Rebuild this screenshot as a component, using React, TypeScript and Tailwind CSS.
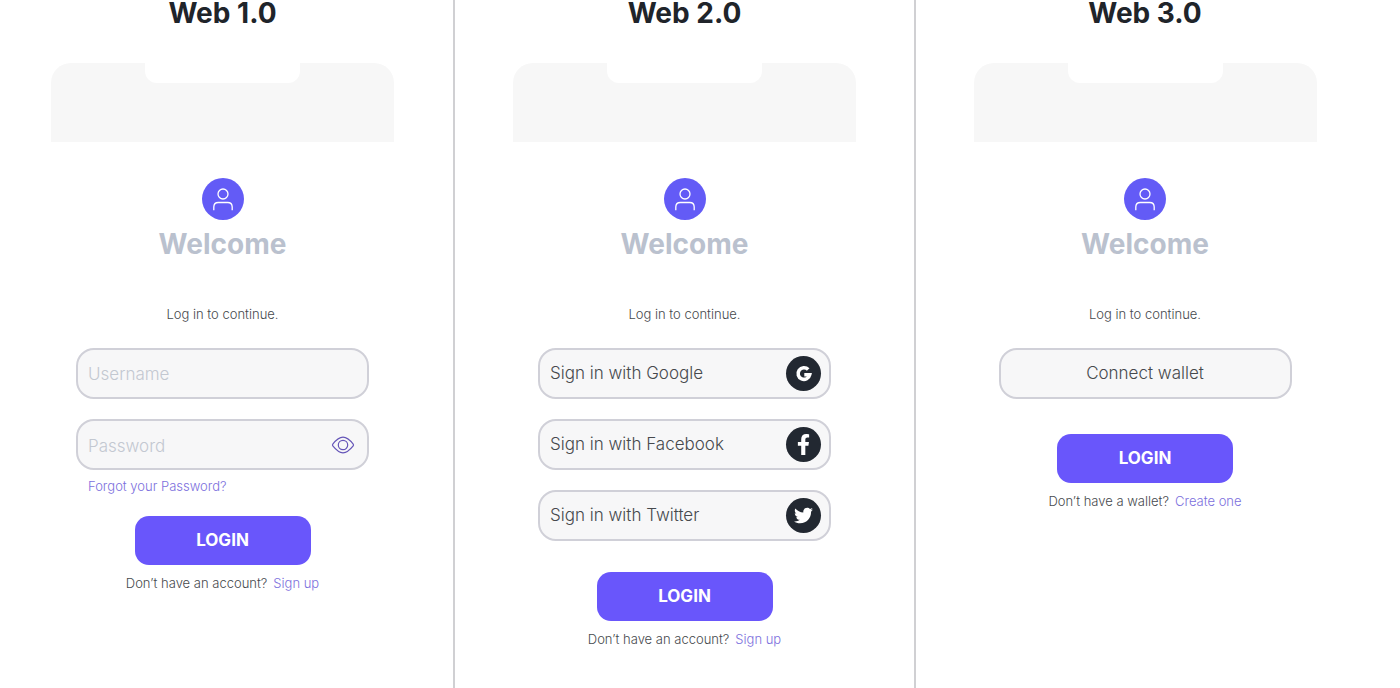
import React, { useState } from 'react';
import { FaFacebookF, FaTwitter } from 'react-icons/fa';

interface LoginColumnProps {
  title: string;
  className?: string;
  children: React.ReactNode;
}

interface LoginFooterProps {
  question: string;
  action: string;
}

const FIELD = 'flex h-[51px] w-full items-center rounded-[18px] border-2 border-[#d0d0d8] bg-[#f7f7f8] text-[17px] font-light';

const GoogleMark = () => (
  <svg viewBox="0 0 24 24" className="h-[18px] w-[18px]" fill="none" stroke="currentColor" strokeWidth="4.800" aria-hidden="true">
    <path d="M17.600 6A7.800 7.800 0 1 0 19.600 13H12.400" />
  </svg>
);

const UserMark = () => (
  <svg viewBox="0 0 42 42" className="h-[42px] w-[42px]" fill="none" stroke="white" strokeWidth="1.300" aria-hidden="true">
    <circle cx="21" cy="16" r="5" />
    <path d="M11.800 32.300v-3.300q0-4.500 4.500-4.500h9.400q4.500 0 4.500 4.500v3.300" />
  </svg>
);

const EyeMark = () => (
  <svg viewBox="0 0 24 18" className="h-[18px] w-6" fill="none" stroke="currentColor" strokeWidth="1.2" aria-hidden="true">
    <path d="M1.800 9.900Q1.100 9 1.800 8.100C5.500 3.500 8.500 1.200 12 1.200s6.500 2.300 10.200 6.900q.7.900 0 1.800C18.500 14.500 15.500 16.800 12 16.800S5.500 14.500 1.800 9.900Z" />
    <circle cx="12" cy="9" r="4.700" />
  </svg>
);

const PROVIDERS = [
  { name: 'Google', icon: <GoogleMark /> },
  { name: 'Facebook', icon: <FaFacebookF className="h-[21px] w-[21px]" /> },
  { name: 'Twitter', icon: <FaTwitter className="h-[19px] w-[19px]" /> },
];

const LoginColumn: React.FC<LoginColumnProps> = ({ title, className = '', children }) => (
  <section className={`min-h-screen ${className}`}>
    <div className="mx-auto flex max-w-[343px] flex-col items-center">
      <h1 className="text-[28px] leading-[26px] font-bold text-[#20242a]">{title}</h1>

      {/* Phone top with notch */}
      <div className="mt-[37px] flex h-[79px] w-full justify-center rounded-t-[20px] bg-[#f7f7f7]">
        <div className="h-5 w-[155px] rounded-b-xl bg-white" />
      </div>

      <div className="mt-9 rounded-full bg-[#635bf6]">
        <UserMark />
      </div>
      <h2 className="mt-2 text-[28px] leading-8 font-bold text-[#bac1ce]">Welcome</h2>
      <p className="mt-11 text-[13px] leading-5 font-light text-[#46494d]">Log in to continue.</p>

      <div className="mt-6 flex w-full flex-col items-center px-[25px]">{children}</div>
    </div>
  </section>
);

const LoginButton = () => (
  <button type="submit" className="h-[49px] w-44 rounded-[14px] bg-[#6956fb] text-[17px] font-bold text-white">
    LOGIN
  </button>
);

const LoginFooter: React.FC<LoginFooterProps> = ({ question, action }) => (
  <p className="mt-2 flex gap-1.5 text-[13px] leading-5 font-light whitespace-nowrap text-[#46494d]">
    {question}
    <a href="#" className="text-[#7c6fdd]">{action}</a>
  </p>
);

const PasswordForm = () => {
  const [showPassword, setShowPassword] = useState(false);

  return (
    <form className="flex w-full flex-col items-center" onSubmit={(e) => e.preventDefault()}>
      <input
        type="text"
        aria-label="Username"
        placeholder="Username"
        className={`${FIELD} px-[10px] placeholder:text-[#c3c8d1]`}
      />
      <div className={`${FIELD} mt-5 pr-3`}>
        <input
          type={showPassword ? 'text' : 'password'}
          aria-label="Password"
          placeholder="Password"
          className="h-full min-w-0 flex-1 bg-transparent px-[10px] pt-0.5 outline-none placeholder:text-[#c3c8d1]"
        />
        <button
          type="button"
          aria-label="Show password"
          onClick={() => setShowPassword(!showPassword)}
          className="text-[#6555b8]"
        >
          <EyeMark />
        </button>
      </div>
      <a href="#" className="mt-1.5 mb-5 self-start pl-3 text-[13px] leading-5 font-light text-[#7c6fdd]">
        Forgot your Password?
      </a>
      <LoginButton />
      <LoginFooter question="Don’t have an account?" action="Sign up" />
    </form>
  );
};

export default function App() {
  return (
    <main className="grid min-h-screen grid-cols-[455fr_461fr_484fr] bg-white font-['Inter',sans-serif]">
      <LoginColumn title="Web 1.0" className="border-r-2 border-[#d0d0d3] pr-2">
        <PasswordForm />
      </LoginColumn>

      <LoginColumn title="Web 2.0" className="border-r-2 border-[#d0d0d3]">
        <div className="mb-[31px] flex w-full flex-col gap-5">
          {PROVIDERS.map((provider) => (
            <button key={provider.name} type="button" className={`${FIELD} justify-between pr-2 pl-[10px] text-[#46494d]`}>
              Sign in with {provider.name}
              <span className="flex h-[35px] w-[35px] items-center justify-center rounded-full bg-[#222831] text-white">
                {provider.icon}
              </span>
            </button>
          ))}
        </div>
        <LoginButton />
        <LoginFooter question="Don’t have an account?" action="Sign up" />
      </LoginColumn>

      <LoginColumn title="Web 3.0" className="pr-[26px]">
        <button type="button" className={`${FIELD} mb-[35px] justify-center text-[#46494d]`}>
          Connect wallet
        </button>
        <LoginButton />
        <LoginFooter question="Don’t have a wallet?" action="Create one" />
      </LoginColumn>
    </main>
  );
}
